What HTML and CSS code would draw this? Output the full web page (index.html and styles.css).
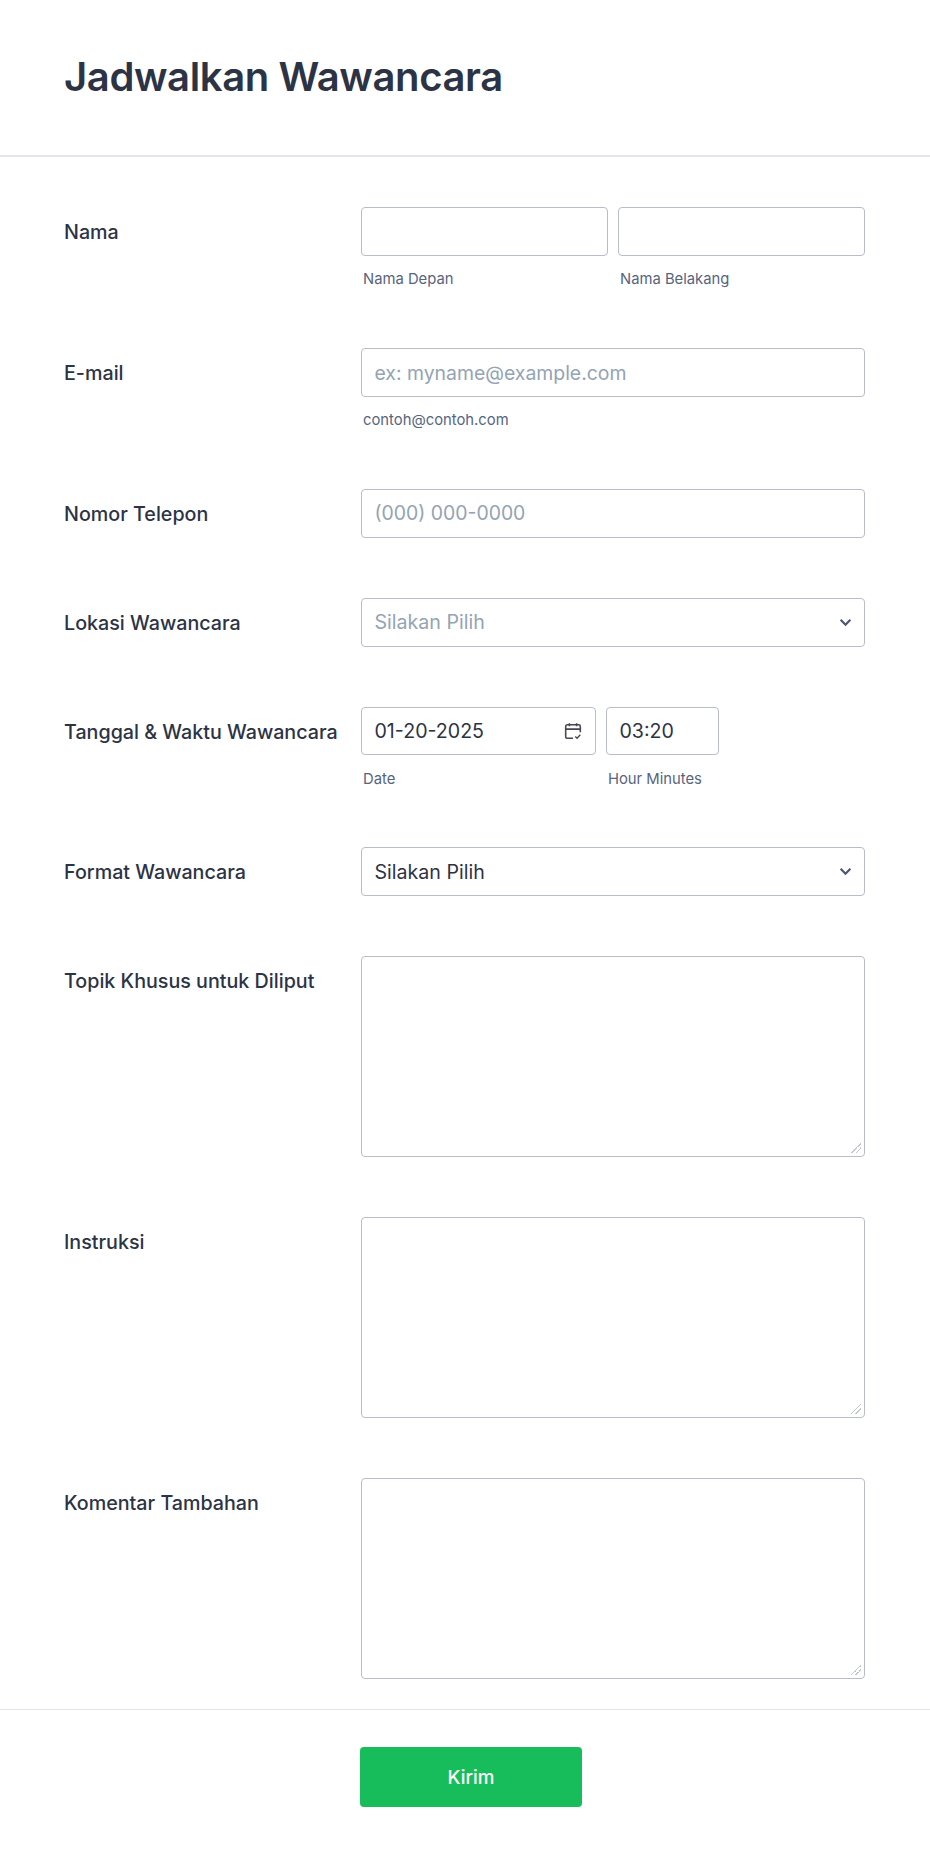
FILE: index.html
```html
<!DOCTYPE html>
<html lang="id">
<head>
<meta charset="utf-8">
<title>Jadwalkan Wawancara</title>
<link rel="stylesheet" href="styles.css">
</head>
<body>
<form class="form">
  <header class="form-header"><h1>Jadwalkan Wawancara</h1></header>
  <div class="fields">
    <div class="row">
      <label class="row-label">Nama</label>
      <div class="pair">
        <div class="cell"><input class="control" type="text"><span class="sub">Nama Depan</span></div>
        <div class="cell"><input class="control" type="text"><span class="sub">Nama Belakang</span></div>
      </div>
    </div>
    <div class="row">
      <label class="row-label">E-mail</label>
      <div class="cell"><input class="control" type="text" placeholder="ex: myname@example.com"><span class="sub">contoh@contoh.com</span></div>
    </div>
    <div class="row">
      <label class="row-label">Nomor Telepon</label>
      <div class="cell"><input class="control" type="text" placeholder="(000) 000-0000"></div>
    </div>
    <div class="row">
      <label class="row-label">Lokasi Wawancara</label>
      <div class="cell select-wrap">
        <select class="control select muted"><option>Silakan Pilih</option></select>
        <svg class="chevron" viewBox="0 0 12 8" aria-hidden="true"><path d="M1.500 1.500 6 6l4.500-4.500"/></svg>
      </div>
    </div>
    <div class="row">
      <label class="row-label">Tanggal &amp; Waktu Wawancara</label>
      <div class="datetime">
        <div class="cell date-cell">
          <div class="date-wrap">
            <input class="control" type="text" value="01-20-2025">
            <svg class="calendar" viewBox="0 0 16 16" aria-hidden="true">
              <path d="M8 14.500H3a1.500 1.500 0 0 1-1.500-1.500V4A1.500 1.500 0 0 1 3 2.500h10A1.500 1.500 0 0 1 14.500 4v5"/>
              <path d="M1.500 6.300h13M4.800 1v2.800M11.200 1v2.800"/>
              <path class="tick" d="m10 12.800 1.600 1.600 2.900-3"/>
            </svg>
          </div>
          <span class="sub">Date</span>
        </div>
        <div class="cell time-cell"><input class="control" type="text" value="03:20"><span class="sub">Hour Minutes</span></div>
      </div>
    </div>
    <div class="row">
      <label class="row-label">Format Wawancara</label>
      <div class="cell select-wrap">
        <select class="control select"><option>Silakan Pilih</option></select>
        <svg class="chevron" viewBox="0 0 12 8" aria-hidden="true"><path d="M1.500 1.500 6 6l4.500-4.500"/></svg>
      </div>
    </div>
    <div class="row">
      <label class="row-label">Topik Khusus untuk Diliput</label>
      <div class="cell"><textarea class="control area"></textarea></div>
    </div>
    <div class="row">
      <label class="row-label">Instruksi</label>
      <div class="cell"><textarea class="control area"></textarea></div>
    </div>
    <div class="row">
      <label class="row-label">Komentar Tambahan</label>
      <div class="cell"><textarea class="control area"></textarea></div>
    </div>
  </div>
  <footer class="form-footer"><button class="submit" type="button">Kirim</button></footer>
</form>
</body>
</html>
```

FILE: styles.css
```css
* { box-sizing: border-box; }
html, body { margin: 0; background: #fff; }
body { font-family: Inter, "Liberation Sans", sans-serif; color: #2c3345; }
.form { display: flex; flex-direction: column; min-height: 1856px; }
.form-header { height: 157px; padding: 53px 64px 0; border-bottom: 2px solid #e3e5ee; }
.form-header h1 { margin: 0; font-size: 40px; line-height: 48px; font-weight: 600; letter-spacing: -0.38px; color: #2c3345; }
.fields { display: flex; flex-direction: column; gap: 60px; padding: 50.4px 65px 30px 64px; }
.row { display: flex; align-items: flex-start; }
.row-label { flex: 0 0 297px; padding-top: 13px; font-size: 19.7px; line-height: 24px; font-weight: 500; color: #2c3345; }
.cell { flex: 1 1 0; min-width: 0; display: flex; flex-direction: column; }
.pair { flex: 1 1 0; display: flex; gap: 10px; }
.control { display: block; width: 100%; height: 48.8px; padding: 0 12.500px; border: 1px solid #b8bdc9; border-radius: 4px; background: #fff; font: 400 19.6px Inter, "Liberation Sans", sans-serif; color: #2c3345; outline: none; }
.control::placeholder { color: #94a3b5; opacity: 1; font-size: 19.4px; }
.sub { display: block; margin: 14px 0 0 2px; font-size: 14.800px; line-height: 18px; color: #57647e; }
.datetime .sub { margin-top: 15px; margin-bottom: -1px; }
.select-wrap { position: relative; }
.select { appearance: none; padding-right: 40px; }
.muted { color: #94a3b5; }
.chevron { position: absolute; right: 13px; top: 20px; width: 13px; height: 9px; fill: none; stroke: #4c5670; stroke-width: 2; }
.datetime { flex: 1 1 0; display: flex; gap: 10px; }
.date-cell { flex: 0 0 235px; }
.time-cell { flex: 0 0 113px; }
.date-wrap { position: relative; }
.calendar { position: absolute; right: 14px; top: 15px; width: 18px; height: 18px; fill: none; stroke: #4b4453; stroke-width: 1.400; }
.tick { stroke-width: 1.200; }
.area { height: 201px; padding: 10px 12.500px; resize: vertical; }
.area::-webkit-resizer { background: linear-gradient(135deg, transparent 0 46%, #c3c7d3 46% 55%, transparent 55% 70%, #c3c7d3 70% 79%, transparent 79%) no-repeat right 3px bottom 3px / 10px 10px; }
.form-footer { border-top: 1px solid #e3e5ee; padding: 37px 0 50px 360px; }
.submit { display: block; width: 222px; height: 60px; border: 0; border-radius: 4px; background: #18bd5b; color: #fff; font: 500 18.800px Inter, "Liberation Sans", sans-serif; }
```
